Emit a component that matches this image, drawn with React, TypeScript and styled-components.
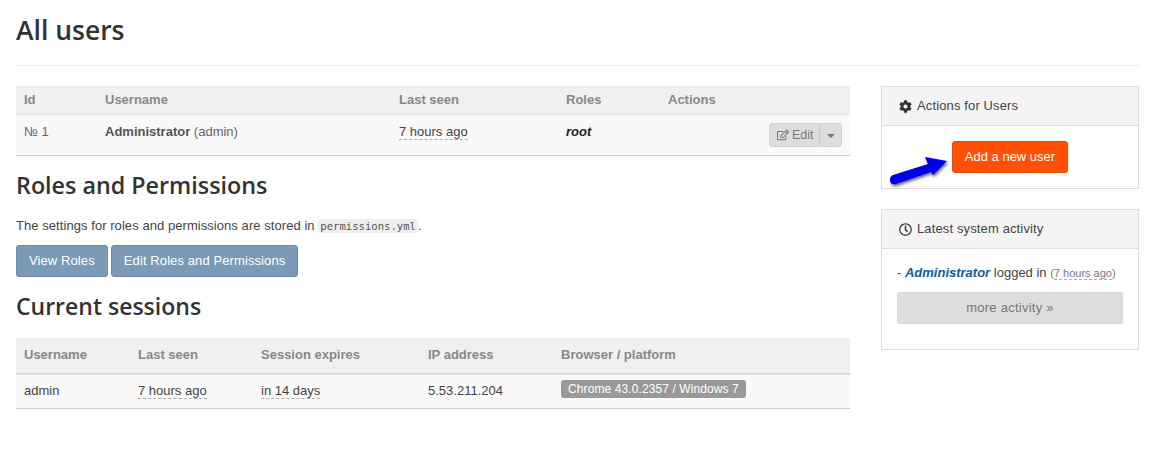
import React from "react";
import styled, { createGlobalStyle } from "styled-components";
import { FaCog, FaRegEdit, FaRegClock } from "react-icons/fa";

const Global = createGlobalStyle`
  html, body { margin: 0; padding: 0; background: #fff; }
  body { font-family: "Liberation Sans", Arial, sans-serif; font-size: 13px; line-height: 20px; color: #333; }
  * { box-sizing: border-box; }
`;

const Page = styled.div`
  width: 1150px;
  height: 458px;
  padding: 0 11px 0 16px;
  overflow: hidden;
`;
const Header = styled.header`
  height: 66px;
  border-bottom: 1px solid #eee;
  margin-bottom: 20px;
  padding-top: 12px;
`;
const Title = styled.h1`
  margin: 0;
  font: 600 26.5px/36px "Open Sans", sans-serif;
  color: #333;
`;
const Columns = styled.div`
  display: flex;
  justify-content: space-between;
  align-items: flex-start;
`;
const Main = styled.main`
  width: 834px;
`;
const Side = styled.aside`
  width: 258px;
  display: flex;
  flex-direction: column;
  gap: 20px;
`;
const Table = styled.table`
  width: 100%;
  table-layout: fixed;
  border-collapse: collapse;
  background: #f9f9f9;
`;
const Col = styled.col<{ $w: number }>`
  width: ${(p) => p.$w}px;
`;
const Th = styled.th<{ $h: number; $line: string }>`
  height: ${(p) => p.$h}px;
  padding: 0 8px;
  text-align: left;
  font-weight: 700;
  color: #888;
  background: #f0f0f0;
  border-bottom: ${(p) => p.$line};
`;
const Td = styled.td<{ $h: number; $top?: number }>`
  height: ${(p) => p.$h}px;
  padding: ${(p) => p.$top ?? 0}px 8px 0;
  vertical-align: top;
  color: #444;
  border-bottom: 1px solid #ccc;
`;
const Muted = styled.span`
  color: #666;
`;
const Strong = styled.strong`
  color: #555;
`;
const Ago = styled.span`
  border-bottom: 1px dashed #aaa;
`;
const Role = styled.em`
  font-weight: 700;
  color: #222;
`;
const ActionsCell = styled.div`
  display: flex;
  justify-content: flex-end;
`;
const SplitButton = styled.div`
  display: flex;
  height: 24px;
  margin-top: 1px;
  background: #ddd;
  border: 1px solid #d3d3d3;
  border-radius: 3px;
  color: #777;
  font-size: 12.5px;
  line-height: 22px;
`;
const EditPart = styled.span`
  display: flex;
  align-items: center;
  gap: 3px;
  width: 50px;
  padding-left: 7px;
  border-right: 1px solid #ccc;
`;
const CaretPart = styled.span`
  display: flex;
  align-items: center;
  justify-content: center;
  width: 21px;
`;
const Caret = styled.i`
  width: 0;
  height: 0;
  border-left: 4px solid transparent;
  border-right: 4px solid transparent;
  border-top: 4px solid #777;
  margin-top: 2px;
`;
const H2 = styled.h2<{ $size: number; $top: number }>`
  margin: ${(p) => p.$top}px 0 0;
  font: 600 ${(p) => p.$size}px/30px "Open Sans", sans-serif;
  color: #333;
`;
const Note = styled.p`
  margin: 16px 0 9px;
  font-size: 13px;
  line-height: 20px;
  letter-spacing: 0.06px;
  color: #444;
`;
const Code = styled.code`
  font: 10.6px/16px "DejaVu Sans Mono", monospace;
  letter-spacing: 0;
  background: #eee;
  color: #555;
  padding: 1px 2px;
  border-radius: 3px;
`;
const ButtonRow = styled.div`
  display: flex;
  gap: 3px;
`;
const BlueButton = styled.button`
  height: 32px;
  padding: 0 12px;
  background: #7b9ab6;
  border: 1px solid #6c8ca8;
  border-radius: 3px;
  color: #fff;
  font: 13px "Liberation Sans", sans-serif;
  letter-spacing: 0.1px;
`;
const SessionsTable = styled(Table)`
  margin-top: 17px;
`;
const Badge = styled.span`
  display: inline-block;
  height: 18px;
  padding: 0 7px;
  margin-top: -1px;
  vertical-align: top;
  background: #999;
  border-radius: 3px;
  color: #fff;
  font-size: 12px;
  line-height: 18px;
  letter-spacing: 0.1px;
`;
const Panel = styled.section`
  position: relative;
  background: #fff;
  border: 1px solid #ddd;
`;
const PanelHead = styled.div`
  height: 39px;
  padding: 0 17px;
  display: flex;
  align-items: center;
  gap: 5px;
  background: #f4f4f4;
  border-bottom: 1px solid #ddd;
  color: #444;
  font-size: 13px;
  letter-spacing: 0.01em;
`;
const ActionsBody = styled.div`
  height: 62px;
  padding-top: 15px;
  padding-left: 70px;
`;
const OrangeButton = styled.button`
  width: 116px;
  height: 32px;
  padding: 0 0 2px;
  background: #ff5005;
  border: 1px solid #e84600;
  border-radius: 3px;
  color: #fff;
  font: 13px "Liberation Sans", sans-serif;
`;
const Arrow = styled.svg`
  position: absolute;
  left: 4px;
  top: 66px;
`;
const ActivityBody = styled.div`
  height: 100px;
  padding: 14px 15px 0;
  font-size: 13px;
  color: #444;
`;
const UserLink = styled.em`
  font-weight: 700;
  color: #125b9a;
`;
const Small = styled.span`
  font-size: 11px;
  color: #777;
`;
const MoreButton = styled.div`
  height: 32px;
  margin-top: 9px;
  background: #ddd;
  border: 1px solid #d5d5d5;
  border-radius: 3px;
  color: #777;
  text-align: center;
  font-size: 13px;
  line-height: 30px;
  letter-spacing: 0.02em;
`;

export default function App() {
  return (
    <Page>
      <Global />
      <Header>
        <Title>All users</Title>
      </Header>
      <Columns>
        <Main>
          <Table>
            <colgroup>
              <Col $w={81} /><Col $w={294} /><Col $w={167} /><Col $w={102} /><Col $w={190} />
            </colgroup>
            <thead>
              <tr>
                <Th $h={28} $line="1px solid #e2e2e2">Id</Th>
                <Th $h={28} $line="1px solid #e2e2e2">Username</Th>
                <Th $h={28} $line="1px solid #e2e2e2">Last seen</Th>
                <Th $h={28} $line="1px solid #e2e2e2">Roles</Th>
                <Th $h={28} $line="1px solid #e2e2e2">Actions</Th>
              </tr>
            </thead>
            <tbody>
              <tr>
                <Td $h={41} $top={7}><Muted>№ 1</Muted></Td>
                <Td $h={41} $top={7}><Strong>Administrator</Strong> <Muted>(admin)</Muted></Td>
                <Td $h={41} $top={7}><Ago>7 hours ago</Ago></Td>
                <Td $h={41} $top={7}><Role>root</Role></Td>
                <Td $h={41} $top={7}>
                  <ActionsCell>
                    <SplitButton>
                      <EditPart><FaRegEdit size={12} />Edit</EditPart>
                      <CaretPart><Caret /></CaretPart>
                    </SplitButton>
                  </ActionsCell>
                </Td>
              </tr>
            </tbody>
          </Table>

          <H2 $size={23.3} $top={14}>Roles and Permissions</H2>
          <Note>The settings for roles and permissions are stored in <Code>permissions.yml</Code>.</Note>
          <ButtonRow>
            <BlueButton>View Roles</BlueButton>
            <BlueButton>Edit Roles and Permissions</BlueButton>
          </ButtonRow>

          <H2 $size={23} $top={14}>Current sessions</H2>
          <SessionsTable>
            <colgroup>
              <Col $w={114} /><Col $w={123} /><Col $w={167} /><Col $w={133} /><Col $w={297} />
            </colgroup>
            <thead>
              <tr>
                <Th $h={36} $line="2px solid #d8d8d8">Username</Th>
                <Th $h={36} $line="2px solid #d8d8d8">Last seen</Th>
                <Th $h={36} $line="2px solid #d8d8d8">Session expires</Th>
                <Th $h={36} $line="2px solid #d8d8d8">IP address</Th>
                <Th $h={36} $line="2px solid #d8d8d8">Browser / platform</Th>
              </tr>
            </thead>
            <tbody>
              <tr>
                <Td $h={35} $top={6}>admin</Td>
                <Td $h={35} $top={6}><Ago>7 hours ago</Ago></Td>
                <Td $h={35} $top={6}><Ago>in 14 days</Ago></Td>
                <Td $h={35} $top={6}>5.53.211.204</Td>
                <Td $h={35} $top={6}><Badge>Chrome 43.0.2357 / Windows 7</Badge></Td>
              </tr>
            </tbody>
          </SessionsTable>
        </Main>

        <Side>
          <Panel>
            <PanelHead><FaCog size={13} color="#333" />Actions for Users</PanelHead>
            <ActionsBody>
              <OrangeButton>Add a new user</OrangeButton>
            </ActionsBody>
            <Arrow width="66" height="40" viewBox="0 0 66 40">
              <defs>
                <filter id="arrow-shadow" x="-20%" y="-30%" width="140%" height="170%">
                  <feDropShadow dx="1" dy="2" stdDeviation="1.5" floodColor="#000" floodOpacity="0.6" />
                </filter>
              </defs>
              <path
                d="M4 27 C4 24 5 23 7 22 L42 11 L39 4 L61 8 L47 22 L45 19 L10 31 C6 32 4 30 4 27 Z"
                fill="#0000e6"
                filter="url(#arrow-shadow)"
              />
            </Arrow>
          </Panel>
          <Panel>
            <PanelHead><FaRegClock size={13} color="#333" />Latest system activity</PanelHead>
            <ActivityBody>
              - <UserLink>Administrator</UserLink> logged in <Small>(<Ago>7 hours ago</Ago>)</Small>
              <MoreButton>more activity »</MoreButton>
            </ActivityBody>
          </Panel>
        </Side>
      </Columns>
    </Page>
  );
}
